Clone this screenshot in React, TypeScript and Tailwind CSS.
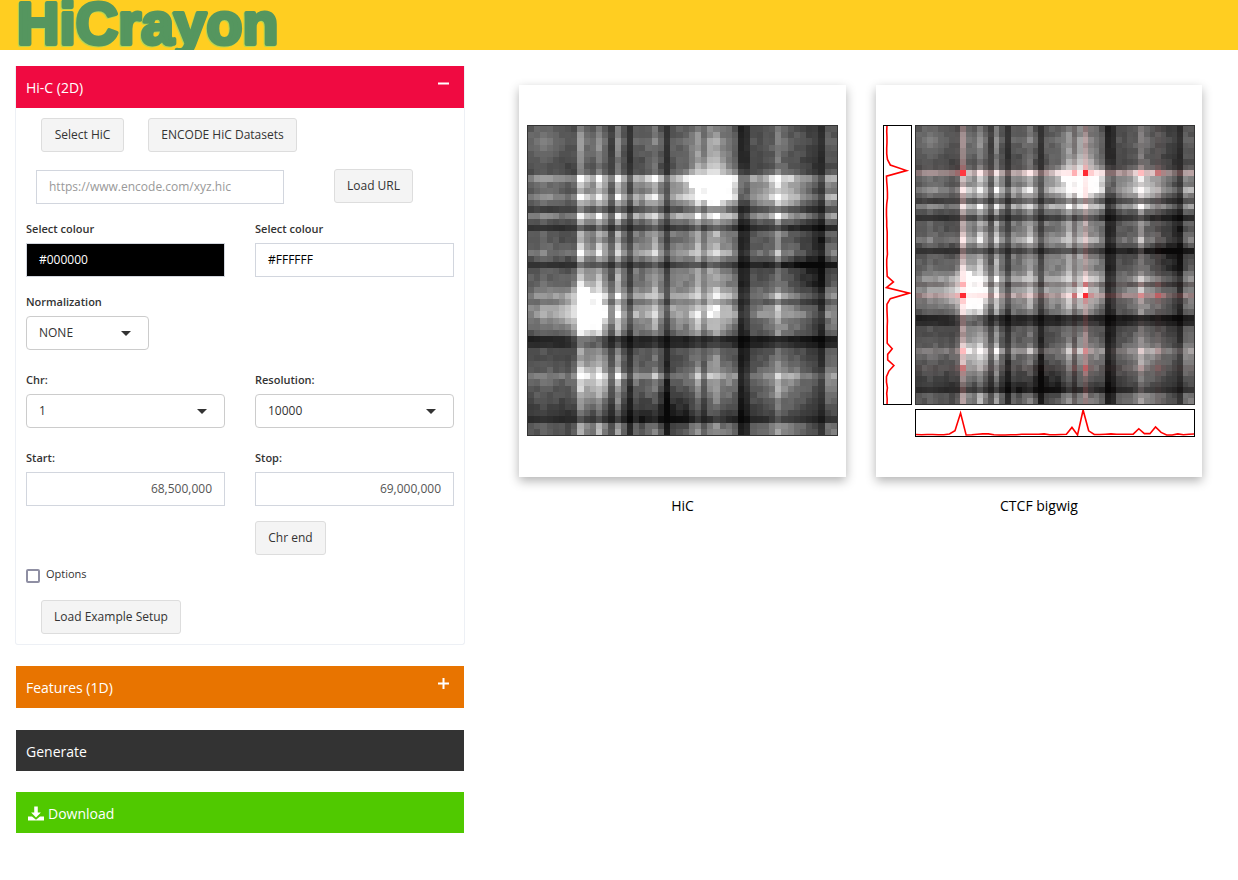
import React from "react";

const P = [.74,.78,.84,.78,.76,.72,.7,.76,1.55,1.2,1.12,1.55,1.15,.74,1.45,.95,.58,1.08,1,1.15,1.36,1,.58,1,1.05,1.05,1.2,1.45,1.05,1.4,1.5,1.2,1.1,.95,.34,.46,.84,.88,.92,1.05,1.42,1.15,1.05,1,.88,.8,.68,.5,1,1.02];

const S = [.06,.05,.06,.06,.05,.05,.08,.2,.88,.04,.05,.07,.08,.08,.05,.04,.04,.05,.05,.07,.07,.07,.07,.08,.05,.05,.06,.07,.33,.04,1,.2,.06,.06,.07,.08,.07,.07,.07,.07,.28,.09,.09,.35,.14,.04,.04,.08,.05,.07];

function rnd(i: number, j: number) {
  const a = Math.min(i, j);
  const b = Math.max(i, j);
  const x = Math.sin(a * 127.1 + b * 311.7) * 43758.5453;
  return x - Math.floor(x);
}

function gauss(i: number, j: number, a: number, b: number, s: number) {
  const d = (i - a) * (i - a) + (j - b) * (j - b);
  return Math.exp(-d / (2 * s * s));
}

function sym(i: number, j: number, a: number, b: number, s: number) {
  return gauss(i, j, a, b, s) + gauss(i, j, b, a, s);
}

function gray(i: number, j: number) {
  let v = P[i] * P[j] * 112 * (0.88 + rnd(i, j) * 0.24);
  v += 85 * sym(i, j, 9.5, 30, 2.4);
  v += 70 * sym(i, j, 8.5, 27, 1.8);
  v += 35 * sym(i, j, 6.5, 30, 1.6);
  v += 60 * sym(i, j, 9, 33, 1.6);
  v += 50 * sym(i, j, 10, 40, 2.2);
  v += 30 * sym(i, j, 3, 29, 3);
  v += 45 * gauss(i, j, 2, 2, 3.5);
  v -= 36 * sym(i, j, 44, 22, 5);
  v -= 10 * sym(i, j, 30, 45, 6);
  v -= 12 * sym(i, j, 22, 45, 6);
  return Math.max(8, Math.min(255, Math.round(v)));
}

function Heat({ size, overlay }: { size: number; overlay?: boolean }) {
  const cells: React.ReactNode[] = [];
  for (let r = 0; r < 50; r++) {
    for (let c = 0; c < 50; c++) {
      const g = gray(r, c);
      let fill = `rgb(${g},${g},${g})`;
      if (overlay) {
        const a = Math.min(0.9, S[r] * S[c] * 1.05 + (S[r] > 0.7 || S[c] > 0.7 ? 0.03 : 0));
        const mix = (v: number, t: number) => Math.round(v * (1 - a) + t * a);
        fill = `rgb(${mix(g, 255)},${mix(g, 20)},${mix(g, 30)})`;
      }
      cells.push(<rect key={r * 50 + c} x={c} y={r} width={1} height={1} fill={fill} />);
    }
  }
  return (
    <svg width={size} height={size} viewBox="0 0 50 50" shapeRendering="crispEdges" className="block border border-[#333] box-border">
      {cells}
    </svg>
  );
}

function VSignal() {
  const pts = S.map((v, i) => `${(0.02 + v * 0.92) * 26 + 1},${i * 5.57}`).concat(["3,280"]).join(" ");
  return (
    <svg width={29} height={280} className="block border border-black box-border">
      <polyline points={pts} fill="none" stroke="#f00" strokeWidth={1.6} />
    </svg>
  );
}

function HSignal() {
  const pts = S.map((v, i) => `${i * 5.57},${26 - v * 26}`).concat(["280,24"]).join(" ");
  return (
    <svg width={280} height={28} className="block border border-black box-border">
      <polyline points={pts} fill="none" stroke="#f00" strokeWidth={1.6} />
    </svg>
  );
}

function Btn({ children, className = "" }: { children: React.ReactNode; className?: string }) {
  return (
    <div className={`h-[34px] shrink-0 flex items-center justify-center bg-[#f4f4f4] border border-[#dddddd] rounded-[3px] text-[12px] text-[#333] ${className}`}>
      {children}
    </div>
  );
}

function Label({ children }: { children: React.ReactNode }) {
  return <div className="h-[14px] leading-[14px] text-[11px] font-semibold text-[#333]">{children}</div>;
}

function Field({ children, className = "" }: { children: React.ReactNode; className?: string }) {
  return (
    <div className={`h-[34px] flex items-center border border-[#d2d6de] px-3 text-[12px] ${className}`}>
      {children}
    </div>
  );
}

function Select({ value, className = "" }: { value: string; className?: string }) {
  return (
    <div className={`h-[34px] flex items-center justify-between bg-white border border-[#cccccc] rounded-[4px] pl-3 pr-[17px] text-[12px] text-[#333] ${className}`}>
      <span>{value}</span>
      <span className="w-0 h-0 border-l-[5px] border-r-[5px] border-t-[5px] border-l-transparent border-r-transparent border-t-[#333]" />
    </div>
  );
}

function Bar({ color, icon, children, className = "" }: { color: string; icon?: "minus" | "plus"; children?: React.ReactNode; className?: string }) {
  return (
    <div className={`relative flex items-center px-[10px] text-white text-[14px] ${color} ${className}`}>
      {children}
      {icon && (
        <svg width="11" height="11" viewBox="0 0 11 11" fill="white" className="absolute right-[15px] top-[12px]">
          <rect x="0" y="4.5" width="11" height="2" />
          {icon === "plus" && <rect x="4.5" y="0" width="2" height="11" />}
        </svg>
      )}
    </div>
  );
}

function Logo() {
  return (
    <svg width="270" height="50" className="block [filter:drop-shadow(-1px_1px_0_#b9d44f)]">
      <text
        x={1}
        y={43.5}
        fontFamily="'Liberation Sans', sans-serif"
        fontWeight={700}
        fontSize={58.8}
        strokeWidth={4}
        strokeLinejoin="round"
        fill="#55965f"
        stroke="#55965f"
      >
        HiCrayon
      </text>
    </svg>
  );
}

export default function App() {
  return (
    <div className="w-[1238px] h-[880px] bg-white overflow-hidden font-['Open_Sans','Noto_Sans',sans-serif]">
      <header className="h-[50px] bg-[#ffce21] overflow-hidden pl-[16px]">
        <Logo />
      </header>
      <div className="flex items-start">
        <aside className="w-[448px] ml-4 mt-4 shrink-0">
          <div className="border border-t-0 border-[#edf0f5] rounded-b-[3px] -mx-px">
            <Bar color="bg-[#f00a41]" icon="minus" className="h-[42px] text-[14.4px]">Hi-C (2D)</Bar>
            <div className="px-[10px] pt-[10px] pb-[10px]">
              <div className="flex pl-[15px] gap-[24px]">
                <Btn className="w-[83px]">Select HiC</Btn>
                <Btn className="w-[149px]">ENCODE HiC Datasets</Btn>
              </div>
              <div className="flex items-start mt-[17px] pl-[10px]">
                <Field className="w-[248px] mt-px text-[#999] text-[12.5px]">https://www.encode.com/xyz.hic</Field>
                <Btn className="w-[79px] ml-[50px]">Load URL</Btn>
              </div>
              <div className="grid grid-cols-[199px_199px] gap-x-[30px] mt-[18px]">
                <div>
                  <Label>Select colour</Label>
                  <Field className="mt-[7px] bg-black text-white">#000000</Field>
                </div>
                <div>
                  <Label>Select colour</Label>
                  <Field className="mt-[7px] text-black">#FFFFFF</Field>
                </div>
              </div>
              <div className="mt-[18px]">
                <Label>Normalization</Label>
                <Select value="NONE" className="w-[123px] mt-[7px]" />
              </div>
              <div className="grid grid-cols-[199px_199px] gap-x-[30px] mt-[23px]">
                <div>
                  <Label>Chr:</Label>
                  <Select value="1" className="mt-[7px]" />
                </div>
                <div>
                  <Label>Resolution:</Label>
                  <Select value="10000" className="mt-[7px]" />
                </div>
              </div>
              <div className="grid grid-cols-[199px_199px] gap-x-[30px] mt-[23px]">
                <div>
                  <Label>Start:</Label>
                  <Field className="mt-[7px] justify-end text-[#555]">68,500,000</Field>
                </div>
                <div>
                  <Label>Stop:</Label>
                  <Field className="mt-[7px] justify-end text-[#555]">69,000,000</Field>
                  <Btn className="w-[71px] mt-[15px]">Chr end</Btn>
                </div>
              </div>
              <div className="flex items-start mt-[14px]">
                <span className="w-[14px] h-[14px] border-2 border-[#8f8fa3] rounded-[2px] bg-white" />
                <span className="ml-[6px] -mt-[2px] text-[11px] leading-[14px] text-[#333]">Options</span>
              </div>
              <Btn className="w-[140px] ml-[15px] mt-[17px]">Load Example Setup</Btn>
            </div>
          </div>
          <Bar color="bg-[#e87400]" icon="plus" className="h-[42px] mt-[21px] pt-[1px]">Features (1D)</Bar>
          <Bar color="bg-[#333333]" className="h-[41px] mt-[22px] pt-[2px]">Generate</Bar>
          <Bar color="bg-[#50c900]" className="h-[41px] mt-[21px] pt-[2px]">
            <svg width="16" height="15" viewBox="0 0 18 16" className="mr-[4px] ml-[2px]" fill="white">
              <path d="M7 0h4v7h3.5L9 12.5 3.5 7H7z" />
              <path d="M0 11.5h4.5L9 15l4.5-3.5H18V16H0z" />
            </svg>
            Download
          </Bar>
        </aside>
        <main className="ml-[55px] mt-[35px]">
          <div className="flex gap-[30px]">
            <div className="w-[327px]">
              <div className="h-[392px] bg-white shadow-[0_4px_10px_rgba(0,0,0,0.3)] flex items-center justify-center pb-[1px]">
                <Heat size={311} />
              </div>
              <div className="mt-[20px] text-center text-[14px] leading-[18px] text-black">HiC</div>
            </div>
            <div className="w-[326px]">
              <div className="h-[392px] bg-white shadow-[0_4px_10px_rgba(0,0,0,0.3)] flex items-center justify-center">
                <div className="grid grid-cols-[29px_280px] grid-rows-[280px_28px] gap-x-[3px] gap-y-[4px]">
                  <VSignal />
                  <Heat size={280} overlay />
                  <div />
                  <HSignal />
                </div>
              </div>
              <div className="mt-[20px] text-center text-[14px] leading-[18px] text-black">CTCF bigwig</div>
            </div>
          </div>
        </main>
      </div>
    </div>
  );
}
